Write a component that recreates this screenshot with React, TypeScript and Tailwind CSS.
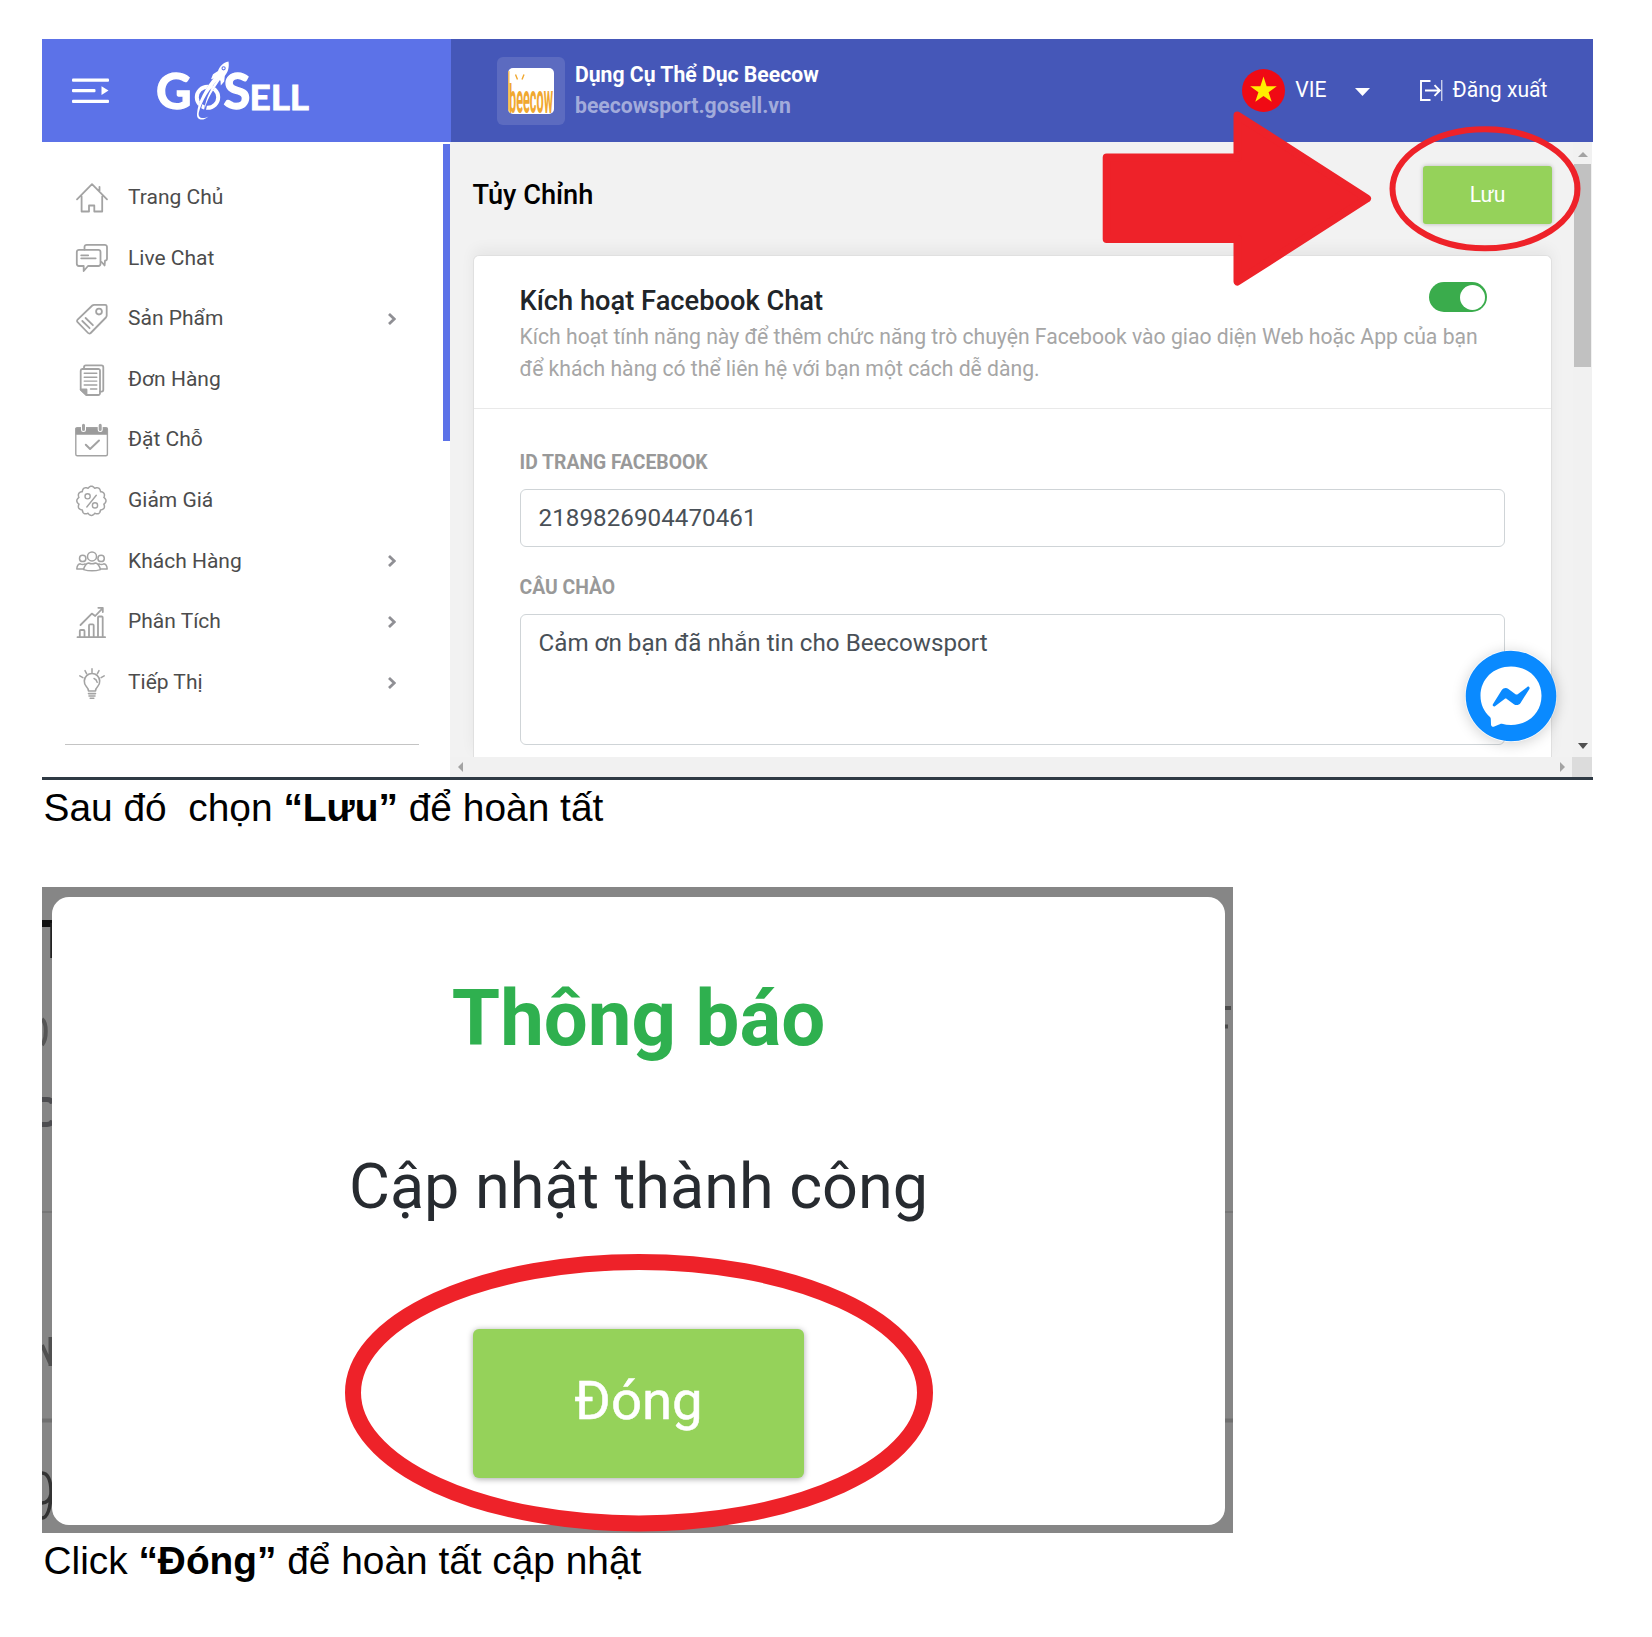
import type { ReactNode } from "react";

const scallop = (() => {
  const pts: string[] = [];
  for (let i = 0; i <= 120; i++) {
    const t = (i / 120) * Math.PI * 2;
    const r = 12.9 + 1.7 * Math.abs(Math.cos(t * 6));
    pts.push(`${(15.4 + r * Math.cos(t)).toFixed(2)},${(15.8 + r * Math.sin(t)).toFixed(2)}`);
  }
  return pts.join(" ");
})();

function MenuIcon({ children }: { children: ReactNode }) {
  return (
    <svg
      viewBox="0 0 32 32"
      className="size-8 shrink-0 overflow-visible fill-none stroke-[#a3a3a3]"
      strokeWidth="1.8"
      strokeLinejoin="round"
      strokeLinecap="round"
    >
      {children}
    </svg>
  );
}

const HomeIcon = (
  <MenuIcon>
    <path d="M1 17.3 16 2.2l15 15.1M23.5 9V4.8M5.6 14.5v15H13V23.5h5.3v6h7.9v-15" />
  </MenuIcon>
);
const ChatIcon = (
  <MenuIcon>
    <path d="M8.5 7.5V5a2.2 2.2 0 0 1 2.2-2.2h18A2.2 2.2 0 0 1 31 5v11.5a2.2 2.2 0 0 1-2 2.2l-.4 4.8-3-3.5" />
    <path d="M3 7.8h19.3A2.2 2.2 0 0 1 24.5 10v11.8a2.2 2.2 0 0 1-2.2 2.2H12l-4.3 5V24H3a2.2 2.2 0 0 1-2.2-2.2V10A2.2 2.2 0 0 1 3 7.8zM5.2 13.3h7M5.2 16.3h14.5" />
  </MenuIcon>
);
const TagIcon = (
  <MenuIcon>
    <path d="M18.2 1.8h11a1.5 1.5 0 0 1 1.5 1.5v9.2c0 .8-.3 1.4-.8 2L14.7 30a1.8 1.8 0 0 1-2.6 0L1.6 19.2a1.8 1.8 0 0 1 0-2.6L16.3 2.5c.5-.5 1.1-.7 1.9-.7zM6.3 18l7.3 7.2M9.6 15l7.3 7.2" />
    <circle cx="23" cy="8.6" r="2.9" />
  </MenuIcon>
);
const OrdersIcon = (
  <MenuIcon>
    <path d="M8 4.7V3.2a1.8 1.8 0 0 1 1.8-1.8h15.7a1.8 1.8 0 0 1 1.8 1.8v22.6a1.8 1.8 0 0 1-1.8 1.8H24" />
    <path d="M6.3 5h15.9A1.7 1.7 0 0 1 24 6.7v22.6a1.7 1.7 0 0 1-1.8 1.7H10.5L4.7 25.5V6.7A1.7 1.7 0 0 1 6.3 5z" />
    <path d="M8.2 9.3h12.6M8.2 13.2h12.6M8.2 17.1h12.6M8.2 21h12.6M14.5 25h6.3" strokeWidth="1.4" />
    <path d="M4.7 25.5h5.8V31z" className="fill-[#a3a3a3]" />
  </MenuIcon>
);
const BookingIcon = (
  <MenuIcon>
    <rect x="-.2" y="3.8" width="31.6" height="28" rx="1.5" strokeWidth="1.4" />
    <path d="M0 4h31.2v6.4H0z" className="fill-[#9b9b9b]" strokeWidth=".8" />
    <path d="M7.5 1.4v4.2M24.2 1.4v4.2" stroke="#fff" strokeWidth="5" />
    <path d="M7.5 1.2v4.2M24.2 1.2v4.2" strokeWidth="3" />
    <path d="m9.8 20.7 4.3 4.3 8.9-8.5" strokeWidth="2" />
  </MenuIcon>
);
const DiscountIcon = (
  <MenuIcon>
    <polygon points={scallop} strokeWidth="1.5" />
    <path d="m20.3 10.2-9.5 11.8" strokeWidth="1.4" />
    <circle cx="11.6" cy="11.3" r="2.6" strokeWidth="1.4" />
    <circle cx="19" cy="20.4" r="2.6" strokeWidth="1.4" />
  </MenuIcon>
);
const CustomersIcon = (
  <MenuIcon>
    <circle cx="16" cy="11.4" r="4.5" strokeWidth="1.5" />
    <circle cx="6.7" cy="13.4" r="3.2" strokeWidth="1.5" />
    <circle cx="25.1" cy="13.4" r="3.2" strokeWidth="1.5" />
    <path
      strokeWidth="1.5"
      d="M7.6 24.6c.6-3.6 3-6.6 5-6.6 2 1 4.8 1 6.8 0 2 0 4.4 3 5 6.6-5 1.5-11.8 1.5-16.8 0zM7 24H.8c.2-3 1.800-5 3.400-5.200 1.500.8 3.300.8 4.800 0M25 24h6.200c-.2-3-1.800-5-3.400-5.200-1.500.8-3.300.8-4.800 0"
    />
  </MenuIcon>
);
const AnalyticsIcon = (
  <MenuIcon>
    <path d="M1.5 31.200h27.600M3.800 31v-6a1 1 0 0 1 1-1h2.700a1 1 0 0 1 1 1v6M13 31V19.400a1 1 0 0 1 1-1h2.700a1 1 0 0 1 1 1V31M22 31V11.500a1 1 0 0 1 1-1h2.700a1 1 0 0 1 1 1V31" />
    <path d="M4.500 19 15.800 7.600l3.400 2.400L26 2.800M22.300 1.800h4.500V6" />
  </MenuIcon>
);
const MarketingIcon = (
  <MenuIcon>
    <path d="M12.500 24c0-2.300-1-3.300-2.300-4.700a7.700 7.700 0 1 1 11.600 0c-1.300 1.400-2.300 2.400-2.300 4.700zM12.500 26.600h7M13 29h6M14.200 31.300h3.600" strokeWidth="1.600" />
    <path d="M16 1.800v3.600M9 3.600l1.700 3.200M23 3.600l-1.700 3.200M3.800 8.800l3.100 1.800M28.200 8.800l-3.100 1.800M18 11.500c1.800.6 2.800 2 3.200 3.800" strokeWidth="1.500" />
  </MenuIcon>
);

const menu: { label: string; icon: ReactNode; sub?: boolean }[] = [
  { label: "Trang Chủ", icon: HomeIcon },
  { label: "Live Chat", icon: ChatIcon },
  { label: "Sản Phẩm", icon: TagIcon, sub: true },
  { label: "Đơn Hàng", icon: OrdersIcon },
  { label: "Đặt Chỗ", icon: BookingIcon },
  { label: "Giảm Giá", icon: DiscountIcon },
  { label: "Khách Hàng", icon: CustomersIcon, sub: true },
  { label: "Phân Tích", icon: AnalyticsIcon, sub: true },
  { label: "Tiếp Thị", icon: MarketingIcon, sub: true },
];

function Logo() {
  return (
    <svg viewBox="0 0 170 80" className="ml-[41px] h-20 w-[170px] shrink-0 fill-white font-['Lato']">
      <text x="6" y="58.300" fontSize="49" fontWeight="700" stroke="#fff" strokeWidth="1.300">G</text>
      <text x="73.500" y="58.300" fontSize="49" fontWeight="700" stroke="#fff" strokeWidth="1.300">S</text>
      <text x="99.500" y="58.500" fontSize="34" fontWeight="700" textLength="59.500" lengthAdjust="spacingAndGlyphs" stroke="#fff" strokeWidth=".9">ELL</text>
      <ellipse cx="57.500" cy="46.300" rx="10.700" ry="10.500" fill="none" stroke="#fff" strokeWidth="4" />
      <path d="M48.500 62C50 52 57 38 67 25" fill="none" stroke="#5c72e8" strokeWidth="3.200" />
      <path d="M55 59C56 50 61 38 70.500 27" fill="none" stroke="#5c72e8" strokeWidth="2" />
      <path d="M58.500 65.500c-5 4.800-12 4-11.500-2.500C47.800 51 55 37 65.500 25l3.500 2.500C60 37 51.500 50 48.700 62c-.7 5.500 4.300 6.300 9.800 3.500z" />
      <path d="M54.500 58C55.500 48 61 36 68.800 27l1.700 1C64.500 37 57.500 47 54.500 58z" />
      <path d="M78.500 10.500c-5.500 1-9 5-10.500 9.500l-5 3.200-2 5 5-1.200 4.500 2.800.3 4.700 3.400-4 .6-5.500C77.800 21.500 79.500 16.500 78.500 10.500z" />
      <circle cx="73.600" cy="17.300" r="1.600" fill="none" stroke="#5c72e8" strokeWidth="1.100" />
    </svg>
  );
}

function TopBar() {
  return (
    <header className="flex h-[103px] text-white">
      <div className="flex w-[409px] items-center bg-[#5c72e8] pl-[30px]">
        <svg viewBox="0 0 37 26" className="h-[26px] w-[37px] fill-white">
          <rect y=".5" width="37" height="3.300" rx="1" />
          <rect y="11" width="23.500" height="3.300" rx="1" />
          <rect y="21.700" width="37" height="3.300" rx="1" />
          <path d="M29.500 8.200v8.800l7-4.400z" />
        </svg>
        <Logo />
      </div>
      <div className="flex flex-1 items-center bg-[#4557b8] pl-[46px]">
        <div className="flex size-[68px] items-center justify-center rounded-[6px] bg-[#5c6bc0]">
          <svg viewBox="0 0 46 46" className="size-[46px] rounded-[5px] bg-white">
            <g transform="translate(0 44.500) scale(1 2.900)">
              <text x="1" y="0" textLength="44" lengthAdjust="spacingAndGlyphs" fontSize="14" fontWeight="700" fill="#f0a830" className="font-['Roboto']">beecow</text>
            </g>
            <path d="m7.500 6.500 2 5M16 6.500l-2 5" stroke="#f0a830" strokeWidth="1.400" />
            <path d="M.8 3v40" stroke="#f0a830" strokeWidth="1.200" />
          </svg>
        </div>
        <div className="relative -top-px ml-[10px] text-[21.180px] leading-[31px] font-bold">
          <p>Dụng Cụ Thể Dục Beecow</p>
          <p className="text-[#a2abdb]">beecowsport.gosell.vn</p>
        </div>
        <div className="ml-auto flex items-center pr-[45.500px] pb-px text-[21.150px]">
          <svg viewBox="0 0 44 44" className="size-[43px]">
            <circle cx="22" cy="22" r="22" fill="#f00a14" />
            <path fill="#ffee00" d="m22 7.700 3.200 9.900h10.400l-8.400 6.100 3.200 9.900L22 27.500l-8.400 6.100 3.200-9.900-8.400-6.100h10.400z" />
          </svg>
          <span className="ml-[10px]">VIE</span>
          <svg viewBox="0 0 15 8" className="mt-[3px] ml-[29px] h-2 w-[15px] fill-white"><path d="M0 0h15L7.500 8z" /></svg>
          <svg viewBox="0 0 23 21" className="ml-[50px] h-[21px] w-[23px] fill-none stroke-white" strokeWidth="1.900">
            <path d="M10.500 1H1v19h9.500M5 10.500h14.500M14.500 5.200l5.300 5.300-5.300 5.300" />
            <path d="M21.800 0v21" strokeWidth="1" />
          </svg>
          <span className="ml-[9px]">Đăng xuất</span>
        </div>
      </div>
    </header>
  );
}

function Sidebar() {
  return (
    <aside className="flex w-[408px] shrink-0 justify-between bg-white">
      <div className="flex w-[377px] flex-col pt-[25.500px] pl-[22.500px]">
        <nav>
          {menu.map((m) => (
            <div key={m.label} className="flex h-[60.600px] items-center pl-[11px] text-[21px] text-[#4c4c4c]">
              {m.icon}
              <span className="ml-[20.500px] flex-1">{m.label}</span>
              {m.sub && (
                <svg viewBox="0 0 8 12" className="mr-[23px] h-3 w-2 fill-none stroke-[#8f8f94]" strokeWidth="2.800">
                  <path d="m1 1 5.300 5L1 11" />
                </svg>
              )}
            </div>
          ))}
        </nav>
        <div className="mt-[31px] h-px bg-[#c4c4c4]" />
      </div>
      <div className="mt-[2px] h-[297px] w-[7px] bg-[#5c72e8]" />
    </aside>
  );
}

function SettingsCard() {
  return (
    <section className="ml-[23px] h-[502px] w-[1079px] rounded-t-[6px] border border-b-0 border-[#e0e0e0] bg-white shadow-[0_-6px_14px_rgba(0,0,0,0.050)]">
      <div className="relative h-[152.500px] border-b border-[#e9e9e9] pt-[25px] pl-[45.500px]">
        <h2 className="text-[27.250px] leading-10 font-medium text-[#212529]">Kích hoạt Facebook Chat</h2>
        <p className="text-[21.170px] leading-[31.500px] whitespace-nowrap text-[#a6a6a6]">
          Kích hoạt tính năng này để thêm chức năng trò chuyện Facebook vào giao diện Web hoặc App của bạn
          <br />
          để khách hàng có thể liên hệ với bạn một cách dễ dàng.
        </p>
        <div className="absolute top-[26px] left-[955px] flex h-[30px] w-[58px] items-center justify-end rounded-full bg-[#3aac4c] pr-[2.500px]">
          <span className="size-[25px] rounded-full bg-white" />
        </div>
      </div>
      <div className="pr-[46px] pl-[45.500px]">
        <p className="pt-[38.500px] text-[19.350px] leading-8 font-bold text-[#999]">ID TRANG FACEBOOK</p>
        <div className="mt-[10px] flex h-[58px] items-center rounded-[6px] border-[1.500px] border-[#cfd4d7] pl-[18px] text-[24.170px] text-[#495057]">
          <span className="tracking-[0.050px]">2189826904470461</span>
        </div>
        <p className="pt-[25px] text-[19.350px] leading-8 font-bold text-[#999]">CÂU CHÀO</p>
        <div className="mt-[10px] h-[130.500px] rounded-[6px] border-[1.500px] border-[#cfd4d7] pt-[10px] pl-[18px] text-[24.200px] leading-[36px] text-[#495057]">
          Cảm ơn bạn đã nhắn tin cho Beecowsport
        </div>
      </div>
    </section>
  );
}

function MainPane() {
  return (
    <main className="flex flex-1 flex-col bg-[#f2f2f2]">
      <div className="flex h-[615.500px] justify-between">
        <div className="flex flex-col">
          <div className="flex h-[113px] items-start justify-between pl-[22.500px]">
            <h1 className="pt-[33px] text-[27.200px] leading-10 font-medium text-black">Tủy Chỉnh</h1>
            <button className="mt-[23.500px] h-[58px] w-[129px] rounded-[3px] bg-[#95d25a] text-[21.150px] text-white shadow-[0_0_4px_rgba(0,0,0,0.250)]">Lưu</button>
          </div>
          <SettingsCard />
        </div>
        <div className="flex w-[19px] flex-col items-center justify-between bg-[#f1f1f1] pt-[10px] pb-[8px]">
          <div className="flex flex-col items-center">
            <svg viewBox="0 0 10 5" className="h-[5px] w-[10px] fill-[#a3a3a3]"><path d="M0 5h10L5 0z" /></svg>
            <div className="mt-[7px] h-[203px] w-[17px] bg-[#c1c1c1]" />
          </div>
          <svg viewBox="0 0 10 6" className="h-[6px] w-[10px] fill-[#505050]"><path d="M0 0h10L5 6z" /></svg>
        </div>
      </div>
      <div className="flex h-[20px] items-center justify-between bg-[#f1f1f1] pl-[8px]">
        <svg viewBox="0 0 5 10" className="h-[10px] w-[5px] fill-[#a3a3a3]"><path d="M5 0v10L0 5z" /></svg>
        <div className="flex h-full items-center">
          <svg viewBox="0 0 5 10" className="mr-[7px] h-[10px] w-[5px] fill-[#a3a3a3]"><path d="M0 0v10l5-5z" /></svg>
          <div className="h-full w-[20px] bg-[#dcdcdc]" />
        </div>
      </div>
    </main>
  );
}

function DashboardShot() {
  return (
    <div className="relative h-[740px] w-[1551px] font-['Roboto',sans-serif]">
      <TopBar />
      <div className="flex h-[635px] pr-px">
        <Sidebar />
        <MainPane />
      </div>
      <div className="h-[2.500px] bg-[#2f3a44]" />
      <svg viewBox="0 0 92 92" className="absolute top-[610.500px] left-[1423px] size-[92px] overflow-visible rounded-full shadow-[0_2px_14px_rgba(0,0,0,0.180)]">
        <circle cx="46" cy="46" r="45.300" fill="#0a8aff" />
        <path fill="#fff" d="M46 16.500c-17.500 0-30.500 12.500-30.500 29.300 0 8.700 3.600 16.100 9.500 21.200.6.500.8 1.200.8 2l.2 5.400c.1 1.700 1.800 2.800 3.300 2.100l6-2.600c.5-.2 1.100-.3 1.600-.1 2.900.8 5.900 1.200 9.100 1.200 17.500 0 30.500-12.500 30.500-29.300S63.500 16.500 46 16.500z" />
        <path fill="#0a8aff" d="m27.900 54.200 8.900-14.100c1.400-2.300 4.500-2.800 6.600-1.200l7.100 5.300c.7.500 1.500.5 2.200 0l9.600-7.300c1.300-1 2.900.6 2.100 2L55.500 53c-1.400 2.200-4.500 2.800-6.600 1.200l-7.100-5.300c-.7-.5-1.500-.5-2.200 0L30 56.200c-1.300 1-3-.6-2.100-2z" />
      </svg>
      <svg viewBox="0 0 500 190" className="absolute top-[80px] left-[1051px] h-[190px] w-[500px] overflow-visible fill-[#ee2229]">
        <path stroke="#ee2229" strokeWidth="8" strokeLinejoin="round" d="M13.700 38.500h130.800V-3.500L274 79.500 144.500 162.500v-42.500H13.700z" />
        <ellipse cx="392" cy="69.800" rx="92.500" ry="59.500" fill="none" stroke="#ee2229" strokeWidth="6" />
      </svg>
    </div>
  );
}

function DialogShot() {
  return (
    <div className="relative h-[646px] w-[1191px] bg-[#868686] pt-[10px] pr-[8px] pb-[8px] pl-[10px] font-['Roboto',sans-serif]">
      <svg viewBox="0 0 1191 646" className="absolute inset-0 h-full w-full fill-none">
        <path d="M0 36.500h10" stroke="#111" strokeWidth="7" />
        <path d="M9.500 36v35" stroke="#222" strokeWidth="2.500" />
        <path d="M0 132c5 4 5 20 0 26" stroke="#555" strokeWidth="4" />
        <path d="M0 212.500h5c3 0 5 2 5.500 4M0 237.500h5c3 0 5-2 5.500-4" stroke="#4d4d50" strokeWidth="5" />
        <path d="M0 325h10M1181 325h10" stroke="#777" strokeWidth="2" />
        <path d="M8.500 464v29M0 472l9 20" transform="translate(0 -14)" stroke="#505050" strokeWidth="4" />
        <path d="M0 533.500h10M1181 533.500h10" stroke="#707070" strokeWidth="4" />
        <path d="M0 586c6 0 9 8 9 18 0 18-4 27-9 27M0 616c5 0 8-4 9-9" stroke="#333" strokeWidth="3.500" />
        <path d="M1182 121h7M1182 139.500h4" stroke="#4c4c4c" strokeWidth="4" />
      </svg>
      <div className="relative flex h-[628px] flex-col items-center rounded-[17px] bg-white">
        <h2 className="mt-[72px] text-[78px] leading-[100px] font-bold text-[#2fb04f]">Thông báo</h2>
        <p className="mt-[78px] text-[62.900px] leading-[80px] text-[#272b30]">Cập nhật thành công</p>
        <button className="mt-[102px] h-[149px] w-[331px] rounded-[6px] bg-[#95d25a] pb-[4px] text-[54.500px] text-white shadow-[0_1px_6px_rgba(0,0,0,0.350)] [-webkit-text-stroke:0.5px_white]">Đóng</button>
      </div>
      <svg viewBox="0 0 588 278" className="absolute top-[367px] left-[303px] h-[278px] w-[588px] fill-none">
        <ellipse cx="294" cy="138.700" rx="286" ry="130.700" stroke="#ee2229" strokeWidth="16" />
      </svg>
    </div>
  );
}

export default function App() {
  return (
    <div className="min-h-[1637px] w-[1652px] bg-white pt-[39px] pl-[42px] text-black">
      <DashboardShot />
      <p className="mt-[5.500px] ml-[1.500px] font-['Liberation_Sans',Arial,sans-serif] text-[38.880px] leading-[46px] whitespace-pre">
        {"Sau đó  chọn "}
        <b>“Lưu”</b>
        {" để hoàn tất"}
      </p>
      <div className="mt-[56px]">
        <DialogShot />
      </div>
      <p className="mt-[5.500px] ml-[1.500px] font-['Liberation_Sans',Arial,sans-serif] text-[38.830px] leading-[46px] whitespace-pre">
        {"Click "}
        <b>“Đóng”</b>
        {" để hoàn tất cập nhật"}
      </p>
    </div>
  );
}
